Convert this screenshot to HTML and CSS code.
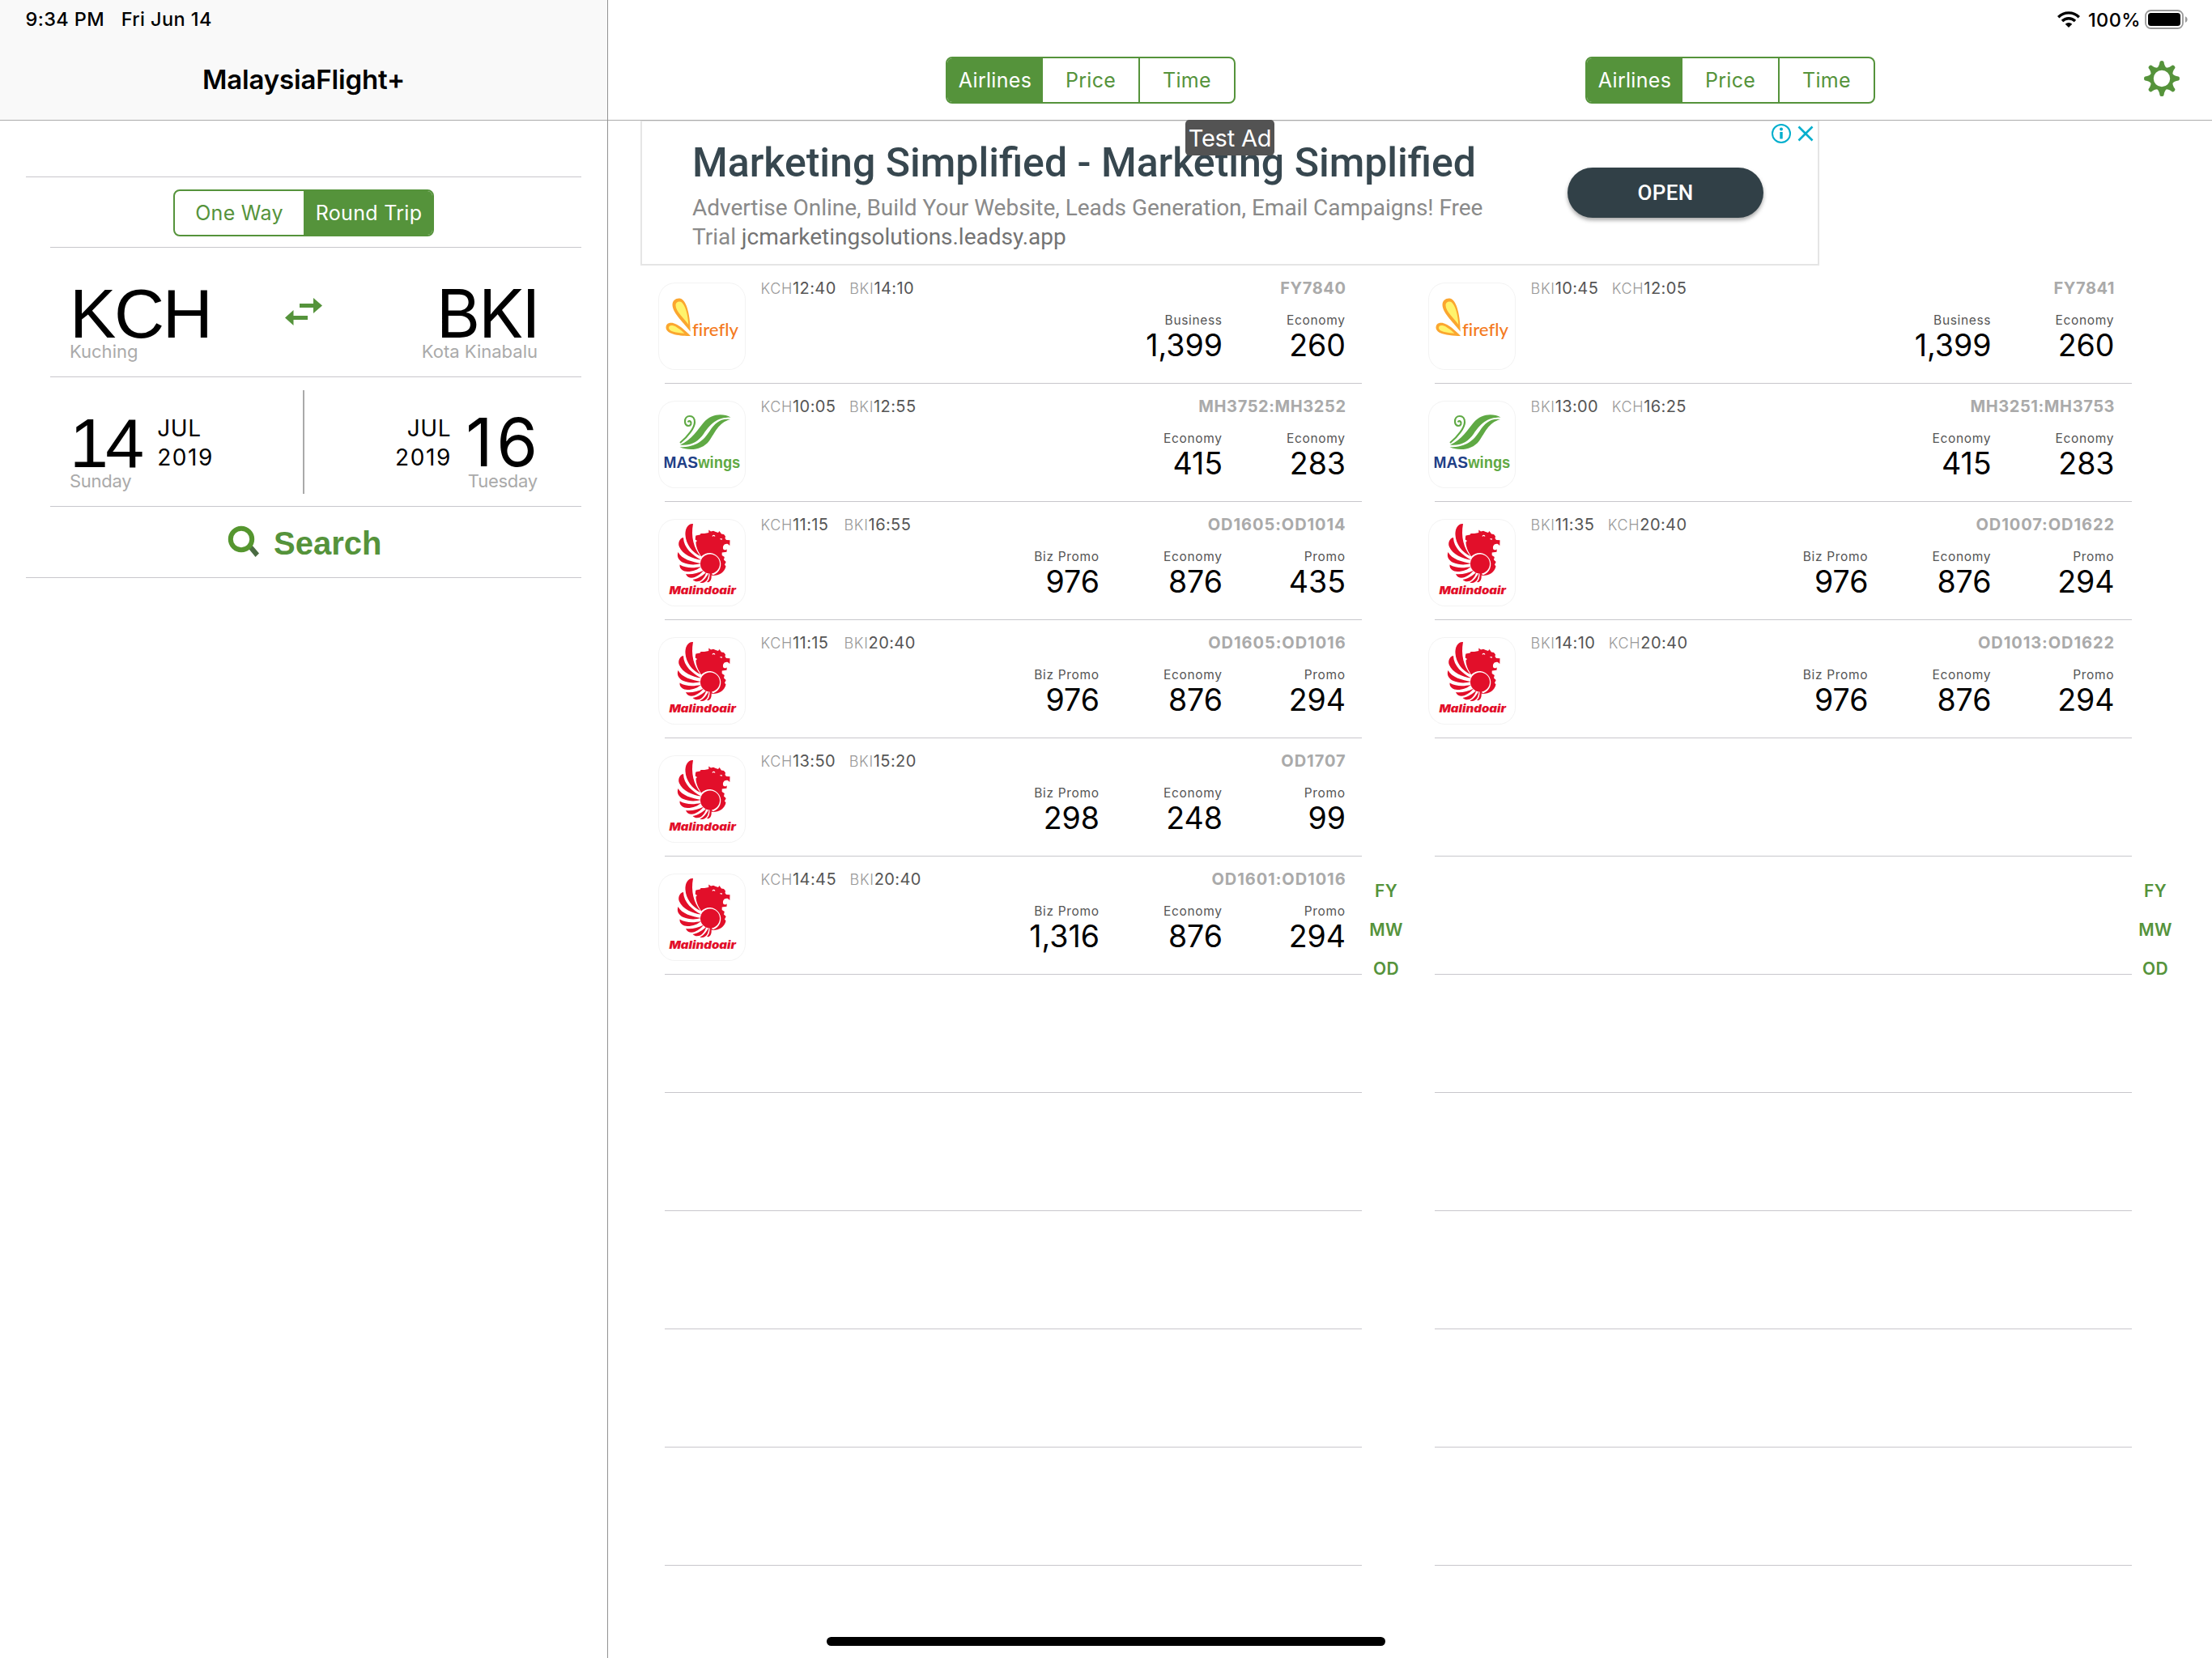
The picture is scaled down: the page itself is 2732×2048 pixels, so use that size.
FILE: index.html
```html
<!DOCTYPE html>
<html lang="en">
<head>
<meta charset="utf-8">
<title>MalaysiaFlight+</title>
<link rel="stylesheet" href="styles.css">
</head>
<body>
<svg class="defs" aria-hidden="true">
  <symbol id="firefly" viewBox="0 0 108 108">
    <path d="M39.7 60.7C33 51 17.500 38 17.500 27.500C17.500 22.500 21 19.500 26 19.500C33.500 19.500 39.500 36 39.700 60.700Z" fill="#fba62f"/>
    <path d="M37.300 52C32 44 21.500 36 21.500 28C21.500 25 23.500 23.500 26.300 23.500C31.500 23.500 36.500 36 37.300 52Z" fill="#fff36b"/>
    <path d="M40 66C28 66 9.500 64.500 9.500 55.500C9.500 51 13 49 17.500 49.800C25 51.500 33 59 40 66Z" fill="#fba62f"/>
    <path d="M32.500 62.800C22 62 13 60.500 13 56C13 53.500 15 52.500 17.500 53C22.500 54 27.500 58.500 32.500 62.800Z" fill="#fff36b"/>
    <text class="wordmark" x="42" y="65.700" textLength="57" lengthAdjust="spacingAndGlyphs" font-family="Lato, sans-serif" font-size="21.500" font-weight="500" fill="#f47a20">firefly</text>
  </symbol>
  <symbol id="maswings" viewBox="0 0 108 108">
    <g fill="#5fa944">
      <path d="M89.500 20.500C80 15.500 66 15.500 56 27C49 35 42 48 27 54.500C41 56 49.500 50 56 41C64 29 72 20.500 89.500 20.500Z"/>
      <path d="M89 23C76 21.500 70 28 63.500 37.500C56 49 47 57.500 26.500 57.300C38 62 54 61.500 63 49.500C70 40 74 27 89 23Z"/>
    </g>
    <path d="M27 52C37 44 45 33 45 26.500C45 21.500 42.500 19 39 19C35 19 33 22 33 25.500C33 29 35 31 37.500 31C40 31 41.500 28 40 26C39 24.700 37 25 36.800 26.500" fill="none" stroke="#5fa944" stroke-width="2.200"/>
    <g font-family="'Liberation Sans', sans-serif" font-weight="700" font-size="20.500">
      <text x="6.500" y="83" textLength="42.500" lengthAdjust="spacingAndGlyphs" fill="#1f3f87">MAS</text>
      <text x="49.300" y="83" textLength="52" lengthAdjust="spacingAndGlyphs" fill="#5fa944">wings</text>
    </g>
  </symbol>
  <symbol id="malindo" viewBox="0 0 108 108">
    <g fill="#e20f2a">
      <path d="M46 22L46.500 20.500L51.700 19.500L52.500 18L57 18L62.300 17L62.300 13.500L65 15.500L68 14.700L71 16L74 17L75.500 15L78 18.500L81 19L83 21.500L82.500 24L84 26L88.500 26.300L88.300 33L86 31C82 30 79 33 80.300 37.500L82.500 38.500L84.700 37.500L84.500 40.700L78.700 41.500L78.700 45L81.800 47L81 50.500L83.700 53L82 56.500L83.500 58.500C82 66 75 70.500 66 70L54 47.500C48.500 40 46.300 33 46.500 28.500L48 27L45.700 25.500Z"/>
      <path d="M43 6C36 5.500 33 13 33.500 20C34 31 42 41.500 52 46C44 36 40 22 43 6Z"/>
      <path d="M31 23C26 24 24 30 26 34.500C30 43.500 42 49.500 53 50.500C42 44.500 31.500 36 31 23Z"/>
      <path d="M24.500 41C22.500 46 25 51.500 31 54C38 57 46 57 53 55C42 53 29 50 24.500 41Z"/>
      <path d="M26.500 56.500C26 62 31 65 36 65C43 65 49 62.500 53 58.700C44 61 34 61 26.500 56.500Z"/>
      <path d="M34 68C36 73 41 73.500 45 72C50 70 53.500 67 56 63.500C49 67 41 69 34 68Z"/>
      <path d="M42.500 75C46 78.500 51 77.500 54 75C57 72 58.500 69 59.500 65.500C55 70 49 74 42.500 75Z"/>
      <path d="M51.500 78.500C55 80 59 78 60.500 75C62 72 62.500 69 62.500 66.500C60 71 57 76 51.500 78.500Z"/>
      <path d="M60 78C64 79 65.700 75 65.700 71L65.700 66L63.500 66C64 73 62 76 60 78Z"/>
    </g>
    <path d="M53 46.500A14 14 0 1 1 67 69.500L66 66.500L56 50Z" fill="#fff"/>
    <circle cx="64" cy="55.500" r="12" fill="#e20f2a"/>
    <path d="M67 21.500C67.500 20 69 20 70 21.500M76.500 24.700L79 25.200" fill="none" stroke="#fff" stroke-width="1.200"/>
    <text x="13.500" y="92.800" textLength="82.500" lengthAdjust="spacingAndGlyphs" font-family="Inter, sans-serif" font-size="13.500" font-style="italic" font-weight="900" fill="#e20f2a">Malindoair</text>
  </symbol>
</svg>

<div class="screen">
  <aside class="sidebar">
    <header class="bar bar-side">
      <div class="status"><span>9:34 PM</span><span>Fri Jun 14</span></div>
      <h1 class="title">MalaysiaFlight+</h1>
    </header>
    <section class="form">
      <div class="form-gap"></div>
      <div class="form-row trip-row">
        <div class="segment segment-trip">
          <button class="seg">One Way</button><button class="seg on">Round Trip</button>
        </div>
      </div>
      <div class="form-row pair-row">
        <div class="place">
          <span class="code helv">KCH</span>
          <span class="sub">Kuching</span>
        </div>
        <svg class="swap" viewBox="0 0 46 34"><path d="M18 7H35V0L46 9.500L35 19V12H18ZM28 22V27H10.500V34L0 24.500L10.500 15V22Z" fill="#55933b"/></svg>
        <div class="place end">
          <span class="code bki">BKI</span>
          <span class="sub">Kota Kinabalu</span>
        </div>
      </div>
      <div class="form-row pair-row">
        <div class="place">
          <div class="date"><span class="code helv day">14</span><span class="month">JUL<br><span class="year">2019</span></span></div>
          <span class="sub tight">Sunday</span>
        </div>
        <i class="divider"></i>
        <div class="place end">
          <div class="date date-end"><span class="month">JUL<br><span class="year">2019</span></span><span class="code day16">16</span></div>
          <span class="sub tight">Tuesday</span>
        </div>
      </div>
      <div class="search-row">
        <svg class="glass" viewBox="0 0 40 40"><path d="M25.500 28L30 24L39 34.500L34.500 39Z" fill="#4a6b42"/><circle cx="17" cy="17" r="13.200" fill="none" stroke="#55962f" stroke-width="6"/></svg>
        <span>Search</span>
      </div>
    </section>
  </aside>

  <main class="detail">
    <header class="bar bar-detail">
      <div class="status status-right">
        <svg class="wifi" viewBox="0 0 28 20"><g fill="none" stroke="#000" stroke-width="3.400"><path d="M1.200 7.200A18 18 0 0 1 26.800 7.200"/><path d="M6 12A11.300 11.300 0 0 1 22 12"/></g><path d="M14 20L9.700 15.700A6 6 0 0 1 18.300 15.700Z"/></svg>
        <span>100%</span>
        <svg class="battery" viewBox="0 0 54 24"><rect x="1" y="1" width="46" height="22" rx="6.500" fill="none" stroke="#999" stroke-width="1.800"/><rect x="4" y="4" width="40" height="16" rx="3.500"/><path d="M50 8.200C53.500 9.500 53.500 14.500 50 15.800Z" fill="#999"/></svg>
      </div>
      <div class="toolbar">
        <div class="segment"><button class="seg on">Airlines</button><button class="seg">Price</button><button class="seg">Time</button></div>
        <div class="segment"><button class="seg on">Airlines</button><button class="seg">Price</button><button class="seg">Time</button></div>
        <svg class="gear" viewBox="-22 -22 44 44">
          <defs><path id="tooth" d="M-6.500 -12.500C-4 -14.500 -3 -17 -2.500 -20.500Q-2.200 -22 0 -22Q2.200 -22 2.500 -20.500C3 -17 4 -14.500 6.500 -12.500Z"/></defs>
          <g fill="#55933b">
            <use href="#tooth"/><use href="#tooth" transform="rotate(45)"/><use href="#tooth" transform="rotate(90)"/><use href="#tooth" transform="rotate(135)"/>
            <use href="#tooth" transform="rotate(180)"/><use href="#tooth" transform="rotate(225)"/><use href="#tooth" transform="rotate(270)"/><use href="#tooth" transform="rotate(315)"/>
          </g>
          <circle r="12.200" fill="none" stroke="#55933b" stroke-width="4"/>
        </svg>
      </div>
    </header>

    <section class="ad">
      <div class="ad-copy">
        <h2 class="ad-title">Marketing Simplified - Marketing Simplified</h2>
        <p class="ad-text">Advertise Online, Build Your Website, Leads Generation, Email Campaigns! Free<br>Trial <span class="ad-link">jcmarketingsolutions.leadsy.app</span></p>
      </div>
      <button class="ad-open">OPEN</button>
      <svg class="ad-choices" viewBox="0 0 52 24"><g fill="none" stroke="#00aecd"><circle cx="12" cy="12" r="11" stroke-width="2"/><path d="M12 10V18.500" stroke-width="3.400"/><path d="M33.500 3.500L50.500 20.500M50.500 3.500L33.500 20.500" stroke-width="2.600"/></g><circle cx="12" cy="6.500" r="2" fill="#00aecd"/></svg>
      <span class="ad-tag">Test Ad</span>
    </section>

    <div class="lists">
      <section class="list">
        <article class="flight"><svg class="logo"><use href="#firefly"/></svg><p class="times"><span>KCH</span>12:40 <span>BKI</span>14:10</p><div class="info"><p class="number">FY7840</p><div class="fares"><p><span>Business</span>1,399</p><p><span>Economy</span>260</p></div></div></article>
        <article class="flight"><svg class="logo"><use href="#maswings"/></svg><p class="times"><span>KCH</span>10:05 <span>BKI</span>12:55</p><div class="info"><p class="number">MH3752:MH3252</p><div class="fares"><p><span>Economy</span>415</p><p><span>Economy</span>283</p></div></div></article>
        <article class="flight"><svg class="logo"><use href="#malindo"/></svg><p class="times wide"><span>KCH</span>11:15 <span>BKI</span>16:55</p><div class="info"><p class="number od">OD1605:OD1014</p><div class="fares"><p><span>Biz Promo</span>976</p><p><span>Economy</span>876</p><p><span>Promo</span>435</p></div></div></article>
        <article class="flight"><svg class="logo"><use href="#malindo"/></svg><p class="times wide"><span>KCH</span>11:15 <span>BKI</span>20:40</p><div class="info"><p class="number od">OD1605:OD1016</p><div class="fares"><p><span>Biz Promo</span>976</p><p><span>Economy</span>876</p><p><span>Promo</span>294</p></div></div></article>
        <article class="flight"><svg class="logo"><use href="#malindo"/></svg><p class="times"><span>KCH</span>13:50 <span>BKI</span>15:20</p><div class="info"><p class="number od">OD1707</p><div class="fares"><p><span>Biz Promo</span>298</p><p><span>Economy</span>248</p><p><span>Promo</span>99</p></div></div></article>
        <article class="flight"><svg class="logo"><use href="#malindo"/></svg><p class="times"><span>KCH</span>14:45 <span>BKI</span>20:40</p><div class="info"><p class="number od">OD1601:OD1016</p><div class="fares"><p><span>Biz Promo</span>1,316</p><p><span>Economy</span>876</p><p><span>Promo</span>294</p></div></div></article>
        <div class="flight"></div><div class="flight"></div><div class="flight"></div><div class="flight"></div><div class="flight"></div>
        <nav class="index"><a>FY</a><a>MW</a><a>OD</a></nav>
      </section>
      <section class="list list-return">
        <article class="flight"><svg class="logo"><use href="#firefly"/></svg><p class="times"><span>BKI</span>10:45 <span>KCH</span>12:05</p><div class="info"><p class="number">FY7841</p><div class="fares"><p><span>Business</span>1,399</p><p><span>Economy</span>260</p></div></div></article>
        <article class="flight"><svg class="logo"><use href="#maswings"/></svg><p class="times"><span>BKI</span>13:00 <span>KCH</span>16:25</p><div class="info"><p class="number">MH3251:MH3753</p><div class="fares"><p><span>Economy</span>415</p><p><span>Economy</span>283</p></div></div></article>
        <article class="flight"><svg class="logo"><use href="#malindo"/></svg><p class="times"><span>BKI</span>11:35 <span>KCH</span>20:40</p><div class="info"><p class="number od">OD1007:OD1622</p><div class="fares"><p><span>Biz Promo</span>976</p><p><span>Economy</span>876</p><p><span>Promo</span>294</p></div></div></article>
        <article class="flight"><svg class="logo"><use href="#malindo"/></svg><p class="times"><span>BKI</span>14:10 <span>KCH</span>20:40</p><div class="info"><p class="number od">OD1013:OD1622</p><div class="fares"><p><span>Biz Promo</span>976</p><p><span>Economy</span>876</p><p><span>Promo</span>294</p></div></div></article>
        <div class="flight"></div><div class="flight"></div><div class="flight"></div><div class="flight"></div><div class="flight"></div><div class="flight"></div><div class="flight"></div>
        <nav class="index"><a>FY</a><a>MW</a><a>OD</a></nav>
      </section>
    </div>
  </main>
  <i class="home"></i>
</div>
</body>
</html>
```
FILE: styles.css
```css
* { box-sizing: border-box; margin: 0; padding: 0; }

body {
  font-family: Inter, "Liberation Sans", sans-serif;
  color: #000;
  background: #fff;
}

button { font: inherit; border: 0; background: none; }
.defs { position: absolute; width: 0; height: 0; }
.wordmark { font-variant-ligatures: none; }

.screen {
  position: relative;
  display: grid;
  grid-template-columns: 750px 1fr;
  width: 2732px;
  height: 2048px;
  overflow: hidden;
}

.detail { border-left: 1px solid #929292; }

/* Bars */
.bar { height: 149px; border-bottom: 1px solid #acacac; }
.bar-side { background: #f9f9f9; }

.status {
  display: flex;
  height: 48px;
  padding-left: 31.5px;
  gap: 20.5px;
  font-size: 23.5px;
  font-weight: 500;
  line-height: 47px;
  letter-spacing: 0.4px;
}

.status-right {
  justify-content: flex-end;
  align-items: center;
  padding: 0 29px 0 0;
  gap: 0;
}
.wifi { width: 28px; height: 20px; margin-right: 10px; }
.battery { width: 54px; height: 24px; margin-left: 5px; }

.title {
  font-size: 33px;
  font-weight: 600;
  line-height: 100px;
  letter-spacing: -0.15px;
  text-align: center;
}

.toolbar {
  display: flex;
  align-items: center;
  padding: 22px 40px 0 417px;
}
.toolbar .segment { width: 358px; margin-right: 432px; }
.toolbar .segment + .segment { margin-right: 332px; }
.gear { width: 44px; height: 44px; margin-top: -4px; }

/* Segmented controls */
.segment {
  display: grid;
  grid-auto-flow: column;
  grid-auto-columns: 1fr;
  height: 58px;
  border: 2px solid #55933b;
  border-radius: 8px;
  overflow: hidden;
}
.seg {
  font-size: 25px;
  letter-spacing: 0.3px;
  line-height: 54px;
  color: #55933b;
}
.seg:not(.on) + .seg:not(.on) { border-left: 2px solid #55933b; }
.seg.on { background: #55933b; color: #fff; }
.segment-trip { width: 322px; }
.segment-trip .on { padding-left: 2px; }

/* Search form */
.form-gap { height: 70px; margin: 0 32px; border-bottom: 1px solid #c8c7cc; }
.form-row { position: relative; display: flex; }
.form-row::after {
  content: "";
  position: absolute;
  left: 62px;
  right: 32px;
  bottom: 0;
  height: 1px;
  background: #c8c7cc;
}
.trip-row { height: 87px; padding: 15px 214px; }

.pair-row {
  height: 160px;
  padding: 47px 86px 0;
  justify-content: space-between;
}
.place { display: flex; flex-direction: column; width: 264px; }
.place.end { align-items: flex-end; }

.code { font-size: 82px; line-height: 68px; }
.helv {
  font-family: "Liberation Sans", Arial, sans-serif;
  font-size: 86px;
  letter-spacing: -2.3px;
}
.bki { font-size: 83px; letter-spacing: -2px; margin-right: -1px; }
.day { letter-spacing: -3.5px; }
.day16 { letter-spacing: 4.6px; margin-right: -4.6px; }
.date { display: flex; align-items: center; height: 68px; gap: 19.5px; }
.date-end { gap: 18px; }
.month { font-size: 28px; line-height: 36px; letter-spacing: 0.6px; }
.year { letter-spacing: 1.6px; }
.end .month { text-align: right; }
.end .year { margin-right: -0.8px; }
.sub { font-size: 22px; line-height: 26px; color: #aaa; }
.tight { letter-spacing: -0.25px; }

.swap { width: 46px; height: 34px; margin-top: 15px; }
.divider { width: 2px; height: 128px; margin-top: -31px; background: #aaa; }

.search-row {
  display: flex;
  height: 88px;
  margin: 0 32px;
  padding-left: 249px;
  align-items: center;
  gap: 17px;
  border-bottom: 1px solid #c8c7cc;
  font: 700 40px/88px "Liberation Sans", Arial, sans-serif;
  color: #55933b;
}
.search-row span { padding-top: 2px; }
.glass { width: 40px; height: 40px; margin-top: -2px; }

/* Banner */
.ad {
  position: relative;
  display: flex;
  width: 1456px;
  height: 179px;
  margin-left: 40px;
  border: 2px solid #e5e5e5;
  border-top-width: 1px;
  font-family: Roboto, sans-serif;
}
.ad-copy { width: 1143px; padding: 22px 0 0 62px; }
.ad-title { font-size: 50px; font-weight: 500; line-height: 58px; color: #37474f; white-space: nowrap; }
.ad-text { margin-top: 9px; font-size: 28px; line-height: 36px; letter-spacing: -0.02px; color: #8a8a8a; white-space: nowrap; }
.ad-link { color: #737373; }
.ad-open {
  width: 242px;
  height: 62px;
  margin-top: 57px;
  border-radius: 31px;
  background: #314047;
  box-shadow: 0 3px 5px rgba(0, 0, 0, 0.35);
  font-size: 26px;
  font-weight: 500;
  letter-spacing: 0.3px;
  color: #fff;
}
.ad-choices { position: absolute; top: 3px; right: 5px; width: 52px; height: 24px; }
.ad-tag {
  position: absolute;
  top: -2px;
  left: 671px;
  width: 110px;
  height: 44px;
  border-radius: 5px;
  background: #535353;
  font: 400 29px/46px Inter, sans-serif;
  letter-spacing: -0.2px;
  text-align: center;
  color: #fff;
}

/* Flight lists */
.lists { display: grid; grid-template-columns: 951px 951px; margin-left: 40px; }
.list { position: relative; }

.flight {
  display: flex;
  height: 146px;
  margin: 0 60px 0 30px;
  padding: 21px 20px 0 0;
  border-bottom: 1px solid #c8c7cc;
}
.list-return .flight { padding-right: 21.5px; }
.logo {
  width: 108px;
  height: 108px;
  margin-left: -8px;
  border-radius: 21px;
  box-shadow: inset 0 0 0 1px #f3f3f3;
}
.times {
  margin-left: 18.5px;
  font-size: 20px;
  line-height: 14px;
  letter-spacing: 0.4px;
  word-spacing: 10.5px;
  color: #555;
}
.times.wide { word-spacing: 13px; }
.times span { font-size: 18px; font-weight: 300; letter-spacing: 0.7px; color: #999; }
.info { flex: 1; text-align: right; }
.number {
  margin-right: -0.6px;
  font-size: 20px;
  font-weight: 700;
  line-height: 14px;
  letter-spacing: 0.6px;
  color: #aaa;
}
.number.od { letter-spacing: 0.95px; }
.fares { display: flex; justify-content: flex-end; margin-top: 23px; }
.fares p { width: 152px; font-size: 37.5px; line-height: 41px; }
.fares span {
  display: block;
  margin-right: 0.4px;
  font-size: 15.5px;
  line-height: 20px;
  letter-spacing: 0.65px;
  color: #555;
}

.index {
  position: absolute;
  top: 749px;
  right: 0;
  width: 60px;
  display: grid;
  font-size: 21px;
  font-weight: 600;
  line-height: 48px;
  letter-spacing: 0.3px;
  text-align: center;
  color: #55933b;
}
.list-return .index { right: 1px; }

.home {
  position: absolute;
  left: 1021px;
  bottom: 15px;
  width: 690px;
  height: 11px;
  border-radius: 6px;
  background: #000;
}
```
